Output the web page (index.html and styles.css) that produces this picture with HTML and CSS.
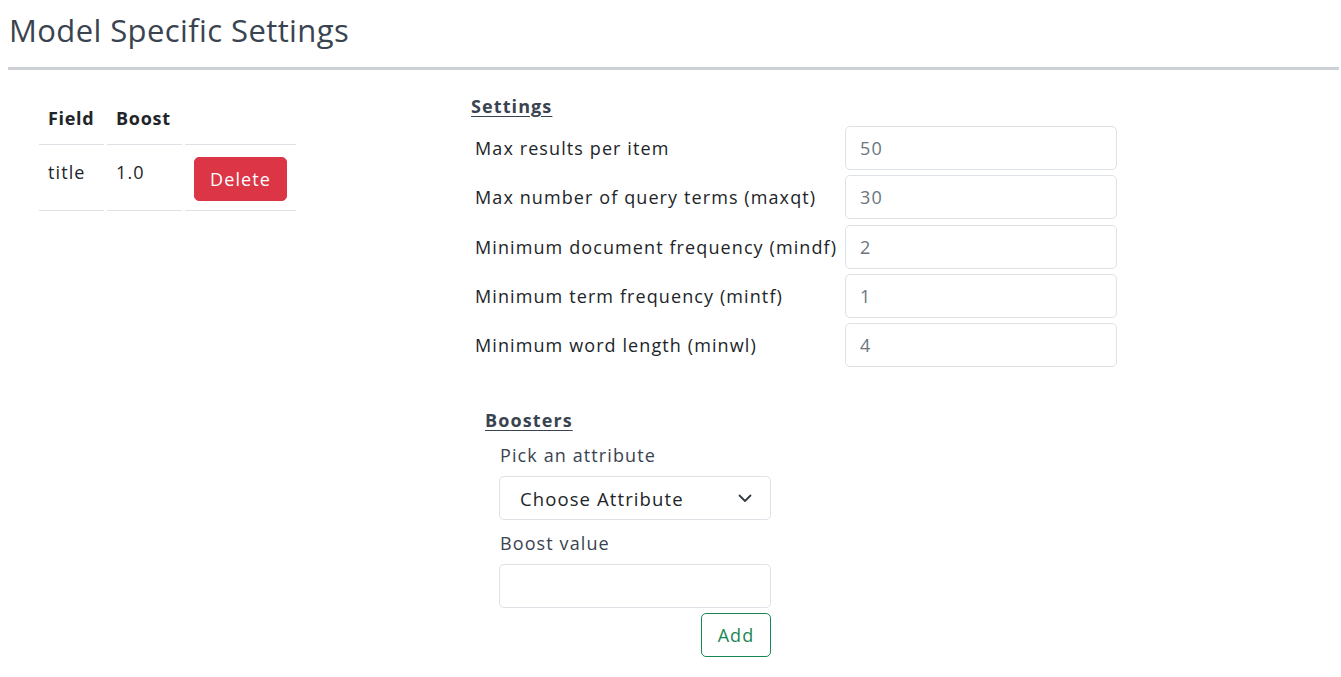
FILE: index.html
```html
<!DOCTYPE html>
<html lang="en">
<head>
<meta charset="utf-8">
<title>Model Specific Settings</title>
<link rel="stylesheet" href="styles.css">
</head>
<body>
<div class="page">
  <h3 class="title">Model Specific Settings</h3>
  <div class="rule"></div>
  <div class="content">
    <div class="left">
      <table class="fields">
        <thead>
          <tr><th class="c1">Field</th><th class="c2">Boost</th><th class="c3"></th></tr>
        </thead>
        <tbody>
          <tr><td>title</td><td>1.0</td><td><button class="btn-del" type="button">Delete</button></td></tr>
        </tbody>
      </table>
    </div>
    <div class="right">
      <h4 class="sec">Settings</h4>
      <div class="settings-grid">
        <label class="lbl">Max results per item</label>
        <input class="inp" type="text" value="50">
        <label class="lbl">Max number of query terms (maxqt)</label>
        <input class="inp" type="text" value="30">
        <label class="lbl">Minimum document frequency (mindf)</label>
        <input class="inp" type="text" value="2">
        <label class="lbl">Minimum term frequency (mintf)</label>
        <input class="inp" type="text" value="1">
        <label class="lbl">Minimum word length (minwl)</label>
        <input class="inp" type="text" value="4">
      </div>
      <div class="boosters">
        <h4 class="sec">Boosters</h4>
        <div class="boost-form">
          <label class="blbl">Pick an attribute</label>
          <div class="select">
            <span>Choose Attribute</span>
            <svg class="chev" width="16" height="16" viewBox="0 0 16 16"><path d="M2.5 5.5 8 11l5.5-5.5" fill="none" stroke="#343a40" stroke-width="1.8" stroke-linecap="round" stroke-linejoin="round"/></svg>
          </div>
          <label class="blbl">Boost value</label>
          <input class="inp binp" type="text" value="">
          <div class="add-row"><button class="btn-add" type="button">Add</button></div>
        </div>
      </div>
    </div>
  </div>
</div>
</body>
</html>
```
FILE: styles.css
```css
* { box-sizing: border-box; }
html, body { margin: 0; padding: 0; background: #fff; }
body {
  font-family: "Open Sans", "DejaVu Sans", sans-serif;
  color: #212529;
  font-size: 18px;
  letter-spacing: 1.1px;
}
.page { padding: 0 2px 0 8px; }
.title {
  margin: 0;
  padding: 12px 0 0 1px;
  font-size: 31px;
  font-weight: 400;
  line-height: 36px;
  letter-spacing: 0.4px;
  color: #3a4350;
}
.rule {
  margin-top: 19px;
  height: 3px;
  background: #cdd0d4;
}
.content {
  display: flex;
  align-items: flex-start;
}
.left {
  width: 463px;
  padding: 18px 0 0 28px;
}
.fields {
  border-collapse: separate;
  border-spacing: 3px;
  font-size: 18px;
}
.fields th {
  text-align: left;
  font-weight: 700;
  letter-spacing: 0.7px;
  padding: 0 8px 0 9px;
  height: 54px;
  vertical-align: middle;
  border-bottom: 1px solid #dee2e6;
  color: #212529;
}
.fields td {
  padding: 9px 8px 9px 9px;
  height: 62px;
  border-bottom: 1px solid #dee2e6;
  vertical-align: top;
}
.fields td:nth-child(-n+2) { padding-top: 12px; }
.c1 { width: 65px; }
.c2 { width: 75px; }
.c3 { width: 111px; }
.btn-del {
  font: inherit;
  font-size: 18px;
  letter-spacing: 1.1px;
  background: #dc3545;
  color: #fff;
  border: 1px solid #dc3545;
  border-radius: 5px;
  width: 93px;
  height: 44px;
  padding: 0;
  cursor: pointer;
}
.right {
  padding-top: 23px;
}
.sec {
  margin: 0;
  font-size: 18px;
  font-weight: 700;
  color: #3a4350;
  text-decoration: underline;
  text-underline-offset: 3px;
  line-height: 26px;
}
.settings-grid {
  margin-top: 7px;
  padding-left: 4px;
  display: grid;
  grid-template-columns: 370px 272px;
  row-gap: 5.25px;
  align-items: center;
}
.lbl { color: #212529; white-space: nowrap; }
.inp {
  font: inherit;
  font-size: 18px;
  letter-spacing: 1.1px;
  height: 44px;
  width: 100%;
  padding: 0 14px;
  border: 1px solid #dee2e6;
  border-radius: 5px;
  color: #6c757d;
  background: #fff;
  outline: none;
}
.boosters {
  margin-top: 40px;
  padding-left: 14px;
}
.boost-form {
  width: 286px;
  padding-left: 14px;
  padding-top: 9px;
}
.blbl {
  display: block;
  padding-left: 1px;
  color: #3a4350;
  line-height: 26px;
  margin-bottom: 8px;
}
.select {
  height: 44px;
  width: 272px;
  border: 1px solid #dee2e6;
  border-radius: 5px;
  display: flex;
  align-items: center;
  justify-content: space-between;
  padding: 0 17px 0 20px;
  color: #212529;
  font-size: 18.5px;
  margin-bottom: 10px;
}
.chev { display: block; }
.binp { width: 272px; }
.add-row {
  width: 272px;
  display: flex;
  justify-content: flex-end;
  margin-top: 5px;
}
.btn-add {
  font: inherit;
  font-size: 18px;
  letter-spacing: 1.1px;
  width: 70px;
  height: 44px;
  background: #fff;
  color: #198754;
  border: 1px solid #198754;
  border-radius: 5px;
  padding: 0;
  cursor: pointer;
}
```
